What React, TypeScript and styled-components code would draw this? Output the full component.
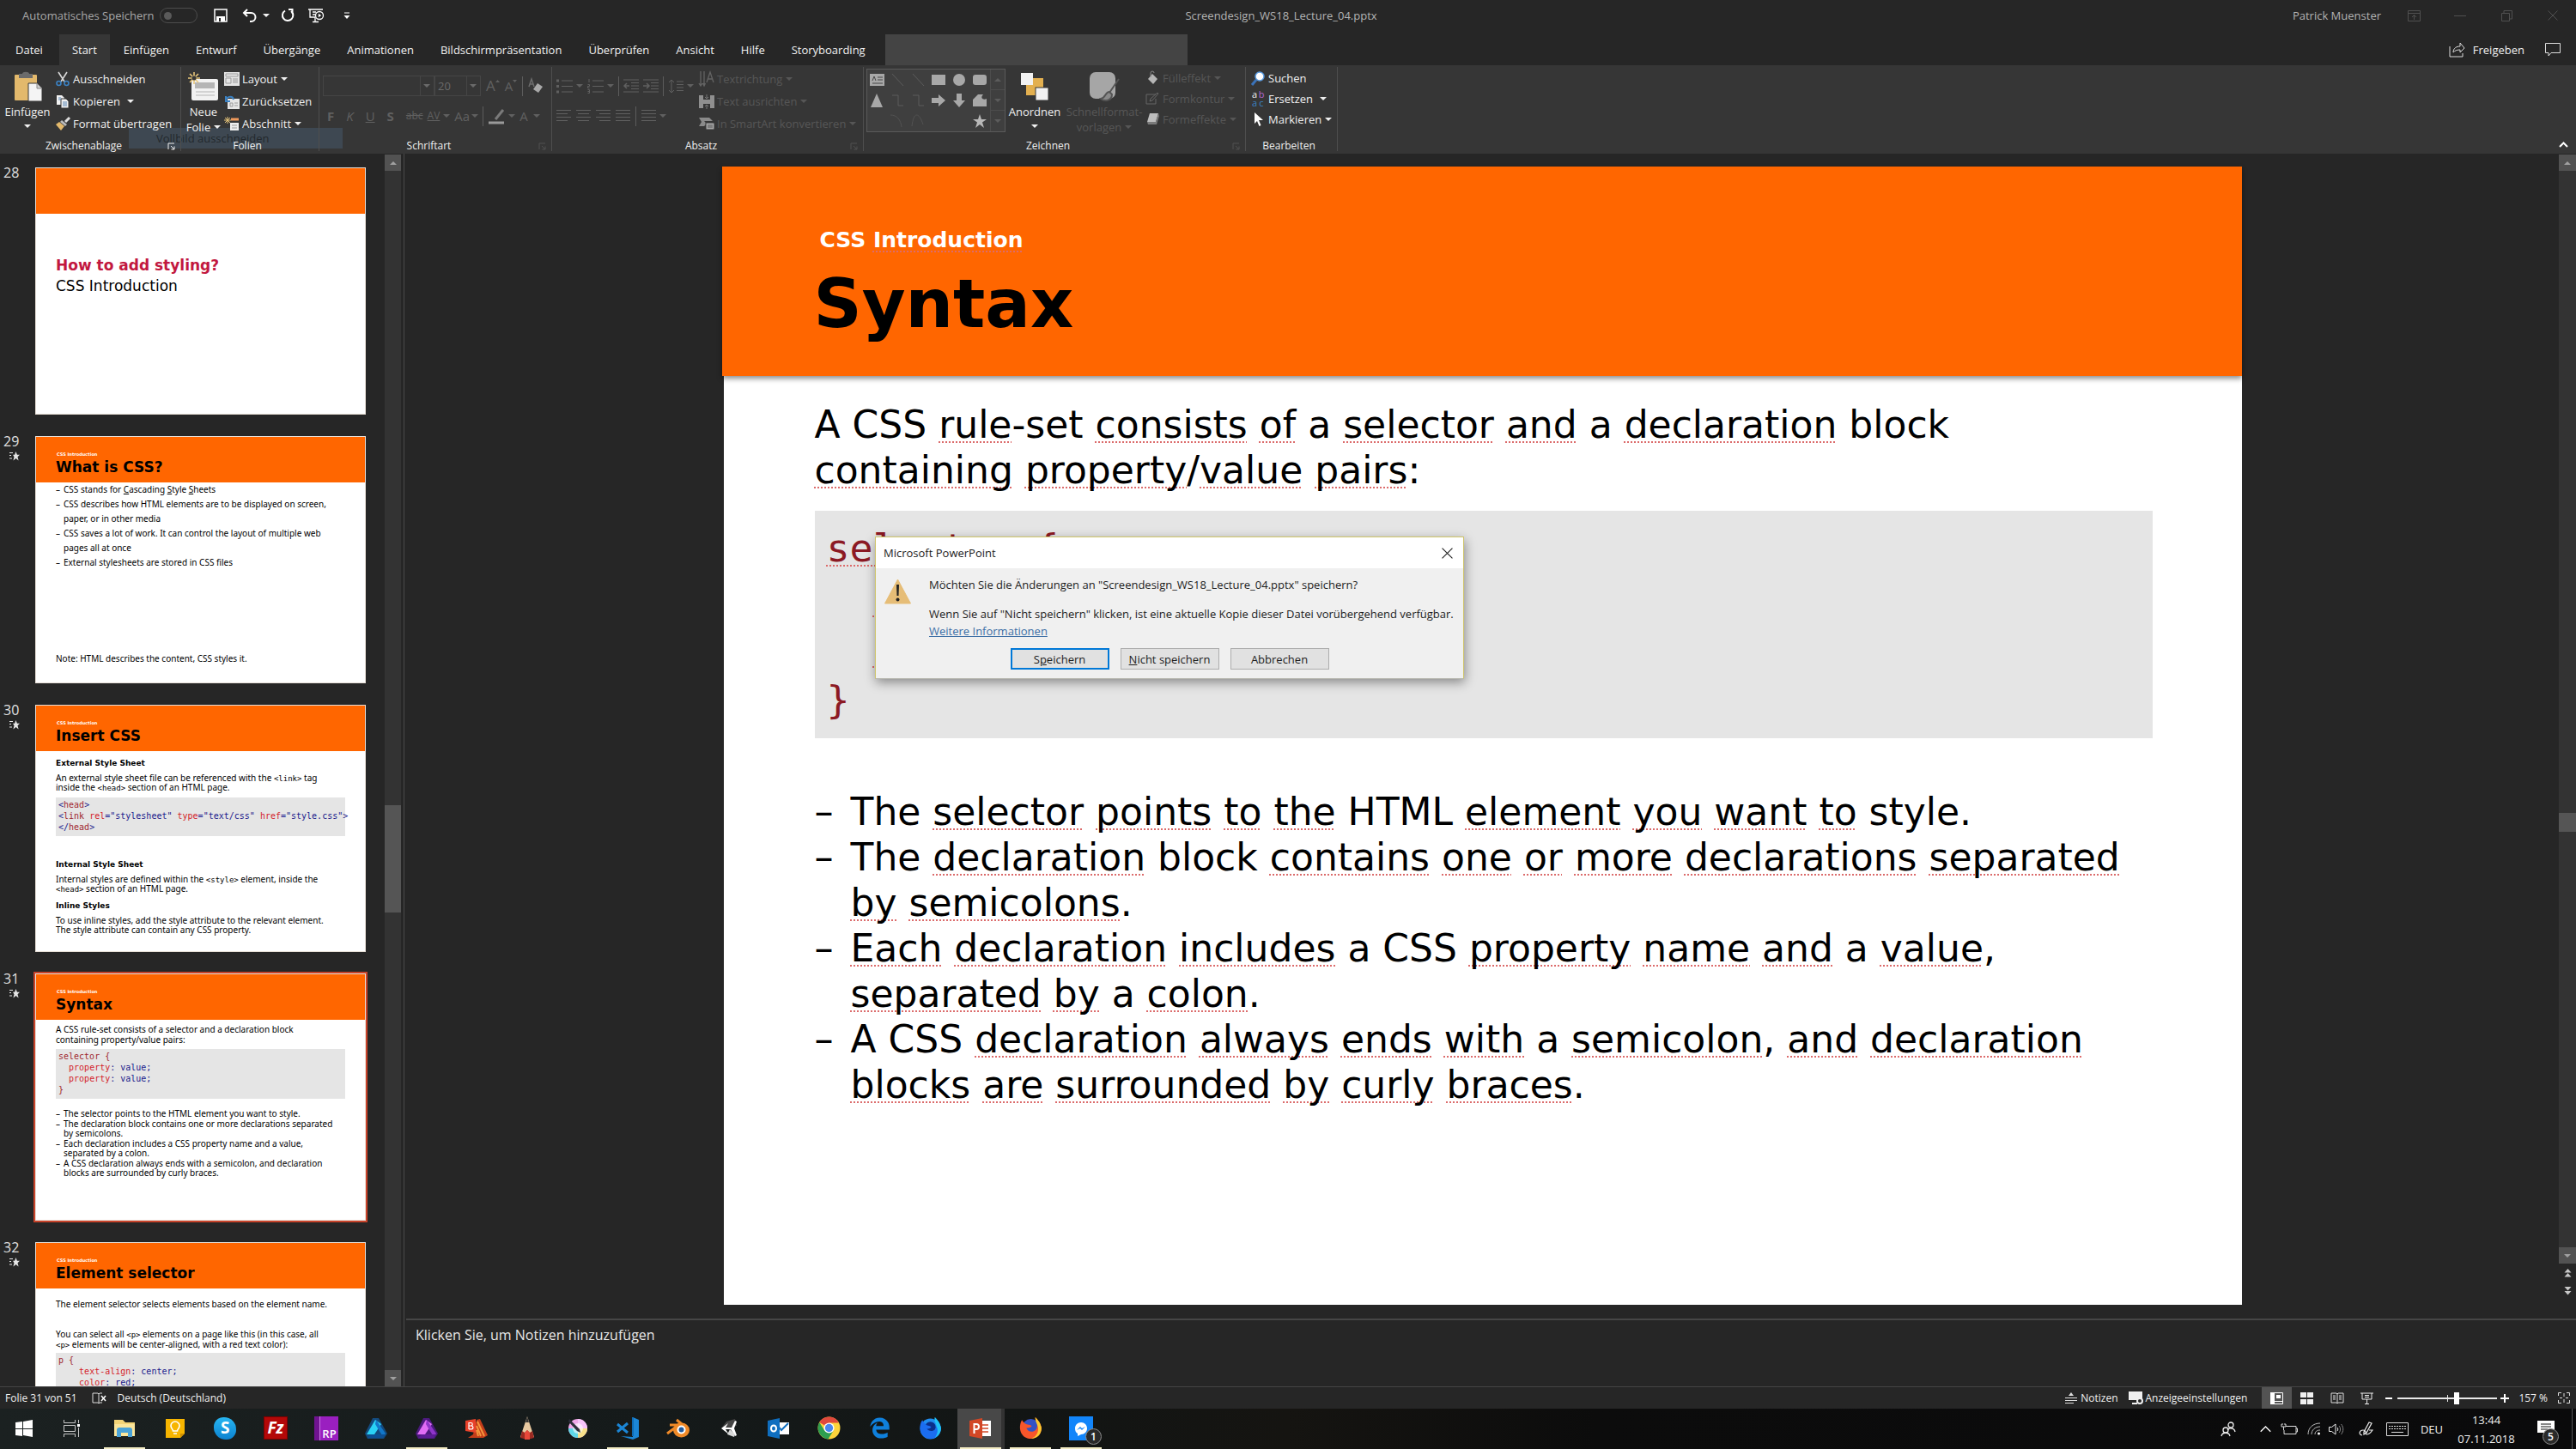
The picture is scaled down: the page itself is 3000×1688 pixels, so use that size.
import React from "react";
import styled, { createGlobalStyle, css } from "styled-components";
import { FaEdgeLegacy } from "react-icons/fa";

const ui = `"Open Sans", "Noto Sans", sans-serif`;
const slideFont = `"DejaVu Sans", sans-serif`;
const mono = `"DejaVu Sans Mono", monospace`;

const Global = createGlobalStyle`
  * { box-sizing: border-box; }
  html, body { margin: 0; height: 100%; }
  body { background: #262626; color: #f0f0f0; font: 13px/18px ${ui}; overflow: hidden; }
  button, input { font: inherit; color: inherit; margin: 0; padding: 0; border: 0; background: none; }
  svg { display: block; flex: none; overflow: visible; }
  h2, h3, p, ul, ol, pre { margin: 0; padding: 0; font-weight: normal; }
  ul, ol { list-style: none; }
`;

/* ---------- shared ---------- */

type IconProps = { w: number; h: number; vb?: string; children: React.ReactNode };
const Icon = ({ w, h, vb, children }: IconProps) => (
  <svg width={w} height={h} viewBox={vb ?? `0 0 ${w} ${h}`} fill="none" aria-hidden="true">
    {children}
  </svg>
);

const Row = styled.div<{ $gap?: number }>`
  display: flex;
  align-items: center;
  gap: ${(p) => p.$gap ?? 0}px;
`;

const Caret = styled.span<{ $space?: number }>`
  flex: none;
  width: 0;
  height: 0;
  margin-left: ${(p) => p.$space ?? 4}px;
  border: 4px solid transparent;
  border-top-color: currentColor;
  border-bottom: 0;
`;

const App = styled.div`
  display: flex;
  flex-direction: column;
  height: 100vh;
  position: relative;
`;

/* ---------- title bar ---------- */

const TitleBar = styled.header`
  display: grid;
  grid-template-columns: 1fr auto 1fr;
  align-items: center;
  height: 40px;
  padding-bottom: 4px;
  color: #b4b4b4;
`;

const QuickAccess = styled.div`
  display: flex;
  align-items: center;
  padding-left: 26px;
  color: #f4f4f4;
`;

const AutoSave = styled.label`
  display: flex;
  align-items: center;
  gap: 6px;
  color: #a8a8a8;
  margin-right: 19px;
`;

const Toggle = styled.input`
  appearance: none;
  width: 44px;
  height: 18px;
  border: 1px solid #4c4c4c;
  border-radius: 9px;
  display: flex;
  align-items: center;
  padding-left: 4px;
  &::before {
    content: "";
    width: 9px;
    height: 9px;
    border-radius: 50%;
    background: #5a5a5a;
  }
`;

const ToolButton = styled.button<{ $space?: number }>`
  display: flex;
  align-items: center;
  margin-right: ${(p) => p.$space ?? 0}px;
`;

const DocTitle = styled.div`
  margin-right: 16px;
`;

const WindowTools = styled.div`
  display: flex;
  justify-content: flex-end;
  align-items: center;
`;

const UserName = styled.span`
  margin-right: 11px;
`;

const WindowButton = styled.button`
  width: 54px;
  display: flex;
  justify-content: center;
  color: #505050;
`;

/* ---------- tabs ---------- */

const TabRow = styled.nav`
  display: flex;
  align-items: stretch;
  gap: 1px;
  height: 36px;
`;

const Tab = styled.button<{ $active?: boolean; $wide?: boolean }>`
  padding: 0 ${(p) => (p.$wide ? 18 : 15)}px;
  ${(p) => p.$active && css`background: #363636;`}
`;

const TellMe = styled.input`
  width: 352px;
  margin-left: 7px;
  background: #444;
`;

const TabTools = styled.div`
  display: flex;
  align-items: center;
  gap: 24px;
  margin-left: auto;
  padding-right: 18px;
`;

const ShareButton = styled.button`
  display: flex;
  align-items: center;
  gap: 9px;
`;

/* ---------- ribbon ---------- */

const Ribbon = styled.section`
  display: grid;
  grid-template-columns: 211px 161px 271px 363px 445px 107px 1fr;
  height: 103px;
  padding: 2px 0 3px;
  background: #363636;
  position: relative;
  isolation: isolate;
`;

const GhostTip = styled.div`
  position: absolute;
  z-index: -1;
  left: 150px;
  top: 73px;
  width: 249px;
  height: 24px;
  padding: 0 32px;
  line-height: 24px;
  background: #3e4852;
  color: #23282d;
`;

const Group = styled.section`
  display: flex;
  flex-direction: column;
  border-right: 1px solid #4e4e4e;
`;

const GroupBody = styled.div<{ $left?: number; $gap?: number }>`
  display: flex;
  flex: 1;
  align-items: flex-start;
  gap: ${(p) => p.$gap ?? 0}px;
  padding: 1px 0 0 ${(p) => p.$left ?? 0}px;
`;

const GroupFooter = styled.footer`
  display: flex;
  align-items: center;
  height: 18px;
  margin-bottom: -3px;
  padding-right: 6px;
  font-size: 12px;
  line-height: 16px;
`;

const GroupLabel = styled.span`
  flex: 1;
  text-align: center;
`;

const Dim = styled.span`
  display: flex;
  color: #505050;
`;

const BigButton = styled.button<{ $w: number; $dim?: boolean }>`
  display: flex;
  flex-direction: column;
  align-items: center;
  width: ${(p) => p.$w}px;
  padding-top: 2px;
  ${(p) => p.$dim && css`color: #565656;`}
`;

const BigIcon = styled.span`
  display: flex;
  align-items: center;
  height: 40px;
`;

const BigCaret = styled(Caret)`
  margin: 6px 0 0;
`;

const SmallColumn = styled.div`
  display: flex;
  flex-direction: column;
`;

const SmallButton = styled.button<{ $h?: number; $dim?: boolean }>`
  display: flex;
  align-items: center;
  height: ${(p) => p.$h ?? 26}px;
  white-space: nowrap;
  ${(p) => p.$dim && css`color: #565656;`}
`;

const SmallIcon = styled.span`
  display: flex;
  justify-content: center;
  width: 18px;
  margin-right: 3px;
`;

const ToolLines = styled.div<{ $end?: number }>`
  display: flex;
  flex-direction: column;
  gap: 11px;
  padding: 9px ${(p) => p.$end ?? 0}px 0 0;
  color: #606060;
`;

const ToolLine = styled.div<{ $gap?: number; $left?: number }>`
  display: flex;
  align-items: center;
  height: 24px;
  gap: ${(p) => p.$gap ?? 8}px;
  padding-left: ${(p) => p.$left ?? 0}px;
`;

const Combo = styled.div<{ $w: number }>`
  display: flex;
  align-items: center;
  width: ${(p) => p.$w}px;
  height: 24px;
  border: 1px solid #454545;
  padding-right: 4px;
  color: #6a6a6a;
`;

const ComboInput = styled.input`
  flex: 1;
  min-width: 0;
  height: 22px;
  padding-left: 3px;
  border-right: 1px solid #454545;
`;

const Divider = styled.span`
  width: 1px;
  height: 23px;
  background: #5c5c5c;
`;

const Letter = styled.button<{ $size?: number; $weight?: number; $deco?: string; $italic?: boolean }>`
  font-size: ${(p) => p.$size ?? 15}px;
  line-height: 20px;
  font-weight: ${(p) => p.$weight ?? 400};
  font-style: ${(p) => (p.$italic ? "italic" : "normal")};
  text-decoration: ${(p) => p.$deco ?? "none"};
`;

const PlainButton = styled.button`
  display: flex;
  align-items: center;
`;

const Gallery = styled.div`
  display: grid;
  grid-template-columns: 143px 17px;
  width: 162px;
  height: 74px;
  margin-top: 1px;
  border: 1px solid #5a5a5a;
  background: #3f3f3f;
`;

const Shapes = styled.div`
  display: grid;
  grid-template-columns: repeat(6, 1fr);
  grid-template-rows: repeat(3, 24px);
`;

const ShapeButton = styled.button`
  display: flex;
  align-items: center;
  justify-content: center;
`;

const GalleryScroll = styled.div`
  display: grid;
  grid-template-rows: repeat(3, 1fr);
  border-left: 1px solid #4c4c4c;
  color: #5c5c5c;
`;

const ScrollStep = styled.button<{ $up?: boolean }>`
  display: flex;
  align-items: center;
  justify-content: center;
  border-bottom: 1px solid #4c4c4c;
  &:last-child { border-bottom: 0; }
  & > span { margin: 0; transform: ${(p) => (p.$up ? "rotate(180deg)" : "none")}; }
`;

const RibbonEnd = styled.div`
  display: flex;
  justify-content: flex-end;
  align-items: flex-end;
  padding: 0 9px 4px;
`;

/* ---------- workspace ---------- */

const Workspace = styled.main`
  display: flex;
  flex: 1;
  min-height: 0;
`;

const Sidebar = styled.aside`
  display: flex;
  width: 471px;
  padding-right: 3px;
  border-right: 1px solid #4a4a4a;
  overflow: hidden;
`;

const ThumbList = styled.ol`
  display: flex;
  flex-direction: column;
  gap: 25px;
  flex: 1;
  padding-top: 16px;
  overflow: hidden;
`;

const ThumbItem = styled.li`
  display: grid;
  grid-template-columns: 41px 385px;
  flex: none;
`;

const ThumbIndex = styled.div`
  padding-left: 4px;
  color: #e0e0e0;
  font-size: 16px;
  line-height: 20px;
  & > span { display: block; height: 16px; line-height: 12px; }
  & > svg { margin: 2px 0 0 7px; }
`;

const Thumb = styled.div<{ $selected?: boolean }>`
  height: 288px;
  background: #fff;
  color: #000;
  border: 1px solid #e8e0d8;
  font-family: ${slideFont};
  overflow: hidden;
  ${(p) => p.$selected && css`outline: 2px solid #c8432a;`}
`;

const ThumbHead = styled.div`
  height: 53px;
  padding: 16px 23px 0;
  background: #ff6600;
`;

const ThumbEyebrow = styled.p`
  color: #fff;
  font-size: 5px;
  line-height: 8px;
  font-weight: 700;
  padding-left: 1px;
`;

const ThumbTitle = styled.h3`
  color: #000;
  font-size: 17px;
  line-height: 22px;
  font-weight: 700;
`;

const ThumbBody = styled.div<{ $top?: number }>`
  padding: ${(p) => p.$top ?? 0}px 23px 0;
  font: 10px/11px "Noto Sans", sans-serif;
  white-space: nowrap;
`;

const ThumbLead = styled.p<{ $accent?: boolean }>`
  font: 17px/24px ${slideFont};
  color: #000;
  ${(p) => p.$accent && css`color: #c2183f; font-weight: 700;`}
`;

const ThumbHeading = styled.p<{ $top?: number }>`
  margin-top: ${(p) => p.$top ?? 0}px;
  font: 700 9px/12px ${slideFont};
  color: #000;
`;

const ThumbText = styled.p<{ $top?: number; $line?: number }>`
  margin-top: ${(p) => p.$top ?? 0}px;
  line-height: ${(p) => p.$line ?? 11}px;
`;

const ThumbBullets = styled.ul<{ $top?: number; $line?: number; $gap?: number }>`
  display: flex;
  flex-direction: column;
  gap: ${(p) => p.$gap ?? 0}px;
  margin-top: ${(p) => p.$top ?? 0}px;
  line-height: ${(p) => p.$line ?? 11}px;
  & > li { display: grid; grid-template-columns: 9px 1fr; }
  & > li::before { content: "–"; }
`;

const ThumbCode = styled.pre<{ $top?: number }>`
  margin: ${(p) => p.$top ?? 0}px 0 0;
  padding: 2px 0 4px 3px;
  background: #e5e5e5;
  font: 10px/13px ${mono};
  color: #a0282f;
`;

const InlineCode = styled.code`
  font: 9px/1px ${mono};
`;

const Prop = styled.span`color: #d41f2c;`;
const Val = styled.span`color: #1a1a8c;`;

const ScrollBar = styled.div<{ $w: number }>`
  display: flex;
  flex-direction: column;
  flex: none;
  width: ${(p) => p.$w}px;
  padding-top: 1px;
`;

const ScrollButton = styled.button<{ $h?: number; $up?: boolean; $plain?: boolean }>`
  display: flex;
  align-items: center;
  justify-content: center;
  height: ${(p) => p.$h ?? 19}px;
  background: ${(p) => (p.$plain ? "none" : "#525252")};
  color: #a0a0a0;
  & > span { margin: 0; transform: ${(p) => (p.$up ? "rotate(180deg)" : "none")}; }
`;

const Track = styled.div<{ $before: number; $after: number }>`
  display: flex;
  flex-direction: column;
  flex: 1;
  background: #333;
  &::before { content: ""; flex: ${(p) => p.$before}; }
  &::after { content: ""; flex: ${(p) => p.$after}; }
`;

const Handle = styled.div<{ $h: number }>`
  height: ${(p) => p.$h}px;
  background: #555;
`;

const Center = styled.section`
  display: flex;
  flex-direction: column;
  flex: 1;
  min-width: 0;
  padding-left: 2px;
`;

const Stage = styled.div`
  display: flex;
  flex: 1;
  min-height: 0;
`;

const Canvas = styled.div`
  display: flex;
  justify-content: center;
  flex: 1;
  padding: 15px 0 16px;
`;

const Slide = styled.article`
  height: 100%;
  aspect-ratio: 4 / 3;
  background: #fff;
  color: #000;
  font: 44px/53px ${slideFont};
`;

const SlideHead = styled.header`
  height: 244px;
  margin-left: -2px;
  padding: 71px 0 0 107px;
  background: #ff6600;
  box-shadow: 0 3px 6px rgba(0, 0, 0, 0.45);
`;

const Eyebrow = styled.p`
  padding-left: 7px;
  color: #fff;
  font-size: 25px;
  line-height: 30px;
  font-weight: 700;
`;

const SlideTitle = styled.h2`
  margin-top: 14px;
  font-size: 78px;
  line-height: 90px;
  font-weight: 700;
`;

const SlideBody = styled.div`
  padding: 30px 104px 0 106px;
  white-space: nowrap;
`;

const Typo = styled.span`
  text-decoration: underline dotted #dc6c6c 2px;
  text-underline-offset: 4px;
  text-decoration-skip-ink: none;
`;

const CodeBlock = styled.pre`
  margin: 21px 0 59px;
  padding: 14px 14px 15px;
  background: #e5e5e5;
  font: 45px/59px ${mono};
  color: #8c1a24;
`;

const Bullets = styled.ul`
  & > li { display: grid; grid-template-columns: 42px 1fr; }
  & > li::before { content: "–"; }
`;

const NotesPane = styled.section`
  height: 79px;
  border-top: 2px solid #464646;
  padding: 6px 11px;
  font-size: 16px;
  line-height: 22px;
  color: #e6e6e6;
`;

/* ---------- dialog ---------- */

const Dialog = styled.section`
  position: absolute;
  left: 1019px;
  top: 625px;
  width: 686px;
  background: #f0f0f0;
  border: 1px solid #cfc46a;
  border-bottom-color: #b8b8b0;
  box-shadow: 1px 4px 12px rgba(0, 0, 0, 0.4);
  color: #1c1c1c;
`;

const DialogHead = styled.header`
  display: flex;
  align-items: center;
  justify-content: space-between;
  height: 36px;
  padding: 0 12px 0 9px;
  background: #fff;
`;

const DialogMain = styled.div`
  display: grid;
  grid-template-columns: 53px 1fr;
  padding: 10px 0 0 9px;
`;

const DialogText = styled.div`
  display: flex;
  flex-direction: column;
  white-space: nowrap;
  & > p + p { margin-top: 16px; }
  & > a { color: #3c6ea5; margin-top: 2px; width: max-content; }
`;

const WarnIcon = styled.div`
  padding-top: 2px;
`;

const DialogActions = styled.footer`
  display: flex;
  justify-content: center;
  gap: 13px;
  padding: 11px 0 10px;
`;

const DialogButton = styled.button<{ $primary?: boolean }>`
  width: 115px;
  height: 25px;
  background: #e1e1e1;
  border: ${(p) => (p.$primary ? "2px solid #0078d7" : "1px solid #adadad")};
`;

/* ---------- status bar ---------- */

const StatusBar = styled.footer`
  display: flex;
  align-items: center;
  height: 26px;
  padding: 0 7px 0 6px;
  border-top: 1px solid #444;
  font-size: 12px;
  line-height: 16px;
`;

const StatusSpacer = styled.div`flex: 1;`;

const StatusButton = styled.button<{ $space?: number; $gap?: number }>`
  display: flex;
  align-items: center;
  gap: ${(p) => p.$gap ?? 4}px;
  margin-right: ${(p) => p.$space ?? 0}px;
`;

const ViewButton = styled.button<{ $active?: boolean }>`
  display: flex;
  align-items: center;
  justify-content: center;
  width: 35px;
  height: 25px;
  ${(p) => p.$active && css`background: #535353;`}
`;

const Zoom = styled.input`
  appearance: none;
  width: 116px;
  height: 14px;
  margin: 0 4px;
  background:
    linear-gradient(#e8e8e8, #e8e8e8) 50% 50% / 1px 8px no-repeat,
    linear-gradient(#e8e8e8, #e8e8e8) 50% 50% / 100% 2px no-repeat;
  &::-webkit-slider-thumb {
    appearance: none;
    width: 6px;
    height: 14px;
    background: #fff;
  }
`;

/* ---------- taskbar ---------- */

const Taskbar = styled.footer`
  display: flex;
  height: 47px;
  background: linear-gradient(90deg, #1b2121 0, #151a1a 25%, #121514 40%, #151411 50%, #0c0c0c 62%, #0a0a0b 100%);
`;

const SystemApps = styled.div`
  display: flex;
  justify-content: space-between;
  width: 112px;
  padding: 0 4px;
`;

const Apps = styled.div`
  display: flex;
  justify-content: space-between;
  width: 1162px;
  margin-left: 9px;
`;

const TaskButton = styled.button<{ $open?: boolean; $active?: boolean }>`
  display: flex;
  align-items: center;
  justify-content: center;
  position: relative;
  width: 48px;
  border-bottom: 2px solid ${(p) => (p.$open ? "#f3ecc4" : "transparent")};
  ${(p) => p.$active && css`background: #484848; box-shadow: 4px 0 0 #333, -3px 0 0 #484848;`}
`;

const Badge = styled.span`
  position: absolute;
  right: 0;
  bottom: 3px;
  width: 19px;
  height: 19px;
  border: 1px solid #8a8a8a;
  border-radius: 50%;
  background: #2a2a2a;
  color: #fff;
  font-size: 12px;
  line-height: 17px;
  font-weight: 600;
  text-align: center;
`;

const Tray = styled.div`
  display: flex;
  margin-left: auto;
  border-right: 1px solid #555;
  margin-right: 4px;
`;

const TrayButton = styled.button<{ $w: number }>`
  display: flex;
  align-items: center;
  justify-content: center;
  position: relative;
  width: ${(p) => p.$w}px;
`;

const Clock = styled.time`
  display: flex;
  flex-direction: column;
  justify-content: center;
  width: 79px;
  text-align: center;
  line-height: 22px;
`;

const TrayBadge = styled(Badge)`
  right: 15px;
  bottom: 5px;
`;

/* ---------- icons ---------- */

const Launcher = () => (
  <Icon w={9} h={9}>
    <path d="M1 8V1h7M4 4l4 4M8 4.500V8H4.500" stroke="currentColor" />
  </Icon>
);

const SaveIcon = () => (
  <Icon w={16} h={16}>
    <path d="M1 1h14v14H1z" stroke="#fff" strokeWidth="1.500" />
    <path d="M3 9h10v6H3z" fill="#fff" />
    <path d="M6 11h2v4H6z" fill="#262626" />
  </Icon>
);
const UndoIcon = () => (
  <Icon w={18} h={16}>
    <path d="M2 5h8.500a5 5 0 0 1 0 10H9M6 1L2 5l4 4" stroke="#fff" strokeWidth="2" />
  </Icon>
);
const RedoIcon = () => (
  <Icon w={16} h={16}>
    <path d="M5 2.500A6.200 6.200 0 1 0 12 3M9 1h4.500v5" stroke="#fff" strokeWidth="2" />
  </Icon>
);
const PresentIcon = () => (
  <Icon w={20} h={18}>
    <path d="M1 2h17M3 2v9h6M6 5h4M6 8h3M9 11v5M6 16.500h7" stroke="#fff" strokeWidth="1.300" />
    <circle cx="14" cy="9" r="4.500" stroke="#fff" strokeWidth="1.300" />
    <path d="M12.800 6.800l3.400 2.200-3.400 2.200z" fill="#fff" />
  </Icon>
);
const CustomIcon = () => (
  <Icon w={8} h={10}>
    <path d="M1 2h6" stroke="#fff" />
    <path d="M0.500 5h7L4 9z" fill="#fff" />
  </Icon>
);

const PasteIcon = () => (
  <Icon w={34} h={36}>
    <rect x="2" y="4" width="26" height="30" rx="1" fill="#e3b96c" />
    <path d="M7 8V3h4c0-3 8-3 8 0h4v5z" fill="#6b6b6b" />
    <path d="M18 14h10l6 6v15H18z" fill="#f4f4f4" stroke="#363636" />
    <path d="M28 14v6h6" fill="#d0d0d0" stroke="#888" />
  </Icon>
);
const CutIcon = () => (
  <Icon w={16} h={18}>
    <path d="M3 1l7 11M13 1L6 12" stroke="#d8d8d8" strokeWidth="1.600" />
    <circle cx="3.500" cy="14" r="2.500" stroke="#3b82c4" strokeWidth="1.600" />
    <circle cx="12.500" cy="14" r="2.500" stroke="#3b82c4" strokeWidth="1.600" />
  </Icon>
);
const CopyIcon = () => (
  <Icon w={16} h={17}>
    <path d="M1 1h6l3 3v8H1z" fill="#f2f2f2" />
    <path d="M6 5h6l3 3v8H6z" fill="#f2f2f2" stroke="#363636" />
    <path d="M3 4h3M3 6h3M8 9h5M8 11h5M8 13h5" stroke="#5b87b5" />
  </Icon>
);
const BrushIcon = () => (
  <Icon w={18} h={16}>
    <path d="M17 1l-5 5" stroke="#ddd" strokeWidth="3" />
    <path d="M8 4l6 5-2 2-6-5z" fill="#bbb" />
    <path d="M5 6l6 5-4 5L1 9z" fill="#e3b96c" />
  </Icon>
);
const NewSlideIcon = () => (
  <Icon w={36} h={34}>
    <rect x="4" y="8" width="31" height="25" rx="2" fill="#f2f2f2" />
    <rect x="8" y="12" width="23" height="7" fill="#b5b5b5" />
    <path d="M9 23h22M9 27h22" stroke="#b5b5b5" />
    <path d="M7 0v14M0 7h14M2 2l10 10M12 2L2 12" stroke="#e8c67a" strokeWidth="1.600" />
    <circle cx="7" cy="7" r="2.500" fill="#363636" />
  </Icon>
);
const LayoutIcon = () => (
  <Icon w={18} h={16}>
    <rect width="18" height="16" fill="#e6e6e6" />
    <path d="M2 2h14v3H2zM2 7h6v6H2zM10 8h6M10 10h6M10 12h6" stroke="#9a9a9a" />
  </Icon>
);
const ResetIcon = () => (
  <Icon w={18} h={17}>
    <rect x="4" y="5" width="14" height="12" fill="#e6e6e6" />
    <path d="M7 10h3v4H7zM12 10h4M12 13h4" stroke="#9a9a9a" />
    <path d="M2 8c0-6 8-7 9-2M2 2v6h5" stroke="#3b82c4" strokeWidth="2" />
  </Icon>
);
const SectionIcon = () => (
  <Icon w={18} h={17}>
    <path d="M4 0v8M0 4h8M1 1l6 6M7 1L1 7" stroke="#e8c67a" />
    <path d="M8 3h9" stroke="#f09a5c" strokeWidth="3" />
    <rect x="7" y="7" width="10" height="9" fill="#eee" />
    <path d="M9 10h6M9 13h6" stroke="#999" />
  </Icon>
);
const EraserIcon = () => (
  <Icon w={18} h={18}>
    <path d="M1 10L4 1l3 9M2 7h4" stroke="#6c6c6c" strokeWidth="1.500" />
    <path d="M11 6l6 4-5 7-6-4z" fill="#a8a8a8" />
  </Icon>
);
const SizeMark = ({ down }: { down?: boolean }) => (
  <Icon w={5} h={16}>
    <path d={down ? "M0 1h5L2.500 4z" : "M0 4h5L2.500 1z"} fill="currentColor" />
  </Icon>
);
const LinesIcon = ({ w = 17, cut = 0, shift = 0 }: { w?: number; cut?: number; shift?: number }) => (
  <Icon w={w} h={17}>
    <path
      d={`M0 1.500h${w}M${shift} 5.500h${w - cut}M0 9.500h${w}M${shift} 13.500h${w - cut}`}
      stroke="currentColor"
    />
  </Icon>
);
const ListIcon = () => (
  <Icon w={19} h={17}>
    <path d="M0 2h3M0 8.500h3M0 15h3" stroke="currentColor" strokeWidth="3" />
    <path d="M6 2h13M6 8.500h13M6 15h13" stroke="currentColor" />
  </Icon>
);
const NumberIcon = () => (
  <Icon w={19} h={17}>
    <path d="M2 0v4M0.500 6.500h2v2h-2v2h2M0.500 12.500h2v4h-2M0.500 14.500h2" stroke="currentColor" />
    <path d="M6 2h13M6 8.500h13M6 15h13" stroke="currentColor" />
  </Icon>
);
const IndentIcon = ({ flip }: { flip?: boolean }) => (
  <Icon w={18} h={17}>
    <path d="M0 1h18M9 4.500h9M9 8h9M9 11.500h9M0 15h18" stroke="currentColor" />
    <path d={flip ? "M0 8h7M4 5l3 3-3 3" : "M7 8H1M4 5L1 8l3 3"} stroke="currentColor" strokeWidth="1.500" />
  </Icon>
);
const SpacingIcon = () => (
  <Icon w={18} h={17}>
    <path d="M4 1v15M1 4l3-3 3 3M1 13l3 3 3-3M10 3h8M10 6.500h8M10 10h8M10 13.500h8" stroke="currentColor" />
  </Icon>
);
const TextDirIcon = () => (
  <Icon w={18} h={18}>
    <path d="M2 0v16M6 0v16M0 14l2 3 2-3M4.500 14L6 17l1.500-3M9 13l4-12 4 12M10.500 9h5" stroke="#646464" strokeWidth="1.300" />
  </Icon>
);
const AlignTextIcon = () => (
  <Icon w={18} h={17}>
    <path d="M0 1h5v15H0zM13 1h5v15h-5zM5 6h8v5H5z" fill="#8f8f8f" />
    <path d="M9 0v5M7 3l2 2 2-2M9 17v-5M7 14l2-2 2 2" stroke="#777" />
  </Icon>
);
const SmartArtIcon = () => (
  <Icon w={18} h={16}>
    <path d="M0 1h12l4 4H6l3 3-3 3H0l3-5z" fill="#8a8a8a" />
    <rect x="8" y="7" width="10" height="8" fill="#a8a8a8" stroke="#363636" />
    <path d="M10 10h6M10 12h6" stroke="#555" />
  </Icon>
);
const ArrangeIcon = () => (
  <Icon w={34} h={34}>
    <rect x="15" y="7" width="12" height="12" fill="#e3b050" />
    <rect x="7" y="15" width="12" height="12" fill="#e3b050" />
    <rect x="1" y="1" width="14" height="14" fill="#f2f2f2" />
    <rect x="18" y="18" width="15" height="15" fill="#f2f2f2" stroke="#363636" />
  </Icon>
);
const QuickStyleIcon = () => (
  <Icon w={36} h={36}>
    <rect x="1" y="1" width="30" height="31" rx="7" fill="#a6a6a6" />
    <path d="M35 9L24 25M24 24c-5 0-4 7-10 8 5 4 13 2 13-5z" stroke="#555" strokeWidth="2" fill="#8a8a8a" />
  </Icon>
);
const FillIcon = () => (
  <Icon w={16} h={16}>
    <path d="M8 3l6 6-5 6-6-6z" fill="#b5b5b5" />
    <path d="M6 7V2a2 2 0 0 1 4 0" stroke="#8a8a8a" />
  </Icon>
);
const OutlineIcon = () => (
  <Icon w={18} h={16}>
    <path d="M13 3H2v11h11V8M6 11l1-3 8-7 1 1-7 8z" stroke="#666" />
  </Icon>
);
const EffectIcon = () => (
  <Icon w={18} h={16}>
    <path d="M6 1h10l-3 10H3z" fill="#bdbdbd" />
    <path d="M3 11h10l3-10 1 3-3 10H4z" fill="#7a7a7a" />
  </Icon>
);
const SearchIcon = () => (
  <Icon w={16} h={17}>
    <path d="M6 10l-5 6" stroke="#3b73b9" strokeWidth="3" />
    <circle cx="10" cy="6" r="5" fill="#fff" stroke="#5a9be0" strokeWidth="1.500" />
  </Icon>
);

const ReplaceGrid = styled.span`
  display: grid;
  grid-template-columns: 8px 8px;
  font-size: 11px;
  line-height: 10px;
`;
const Glyph = styled.span<{ $color: string }>`
  color: ${(p) => p.$color};
`;
const ReplaceIcon = () => (
  <ReplaceGrid aria-hidden="true">
    <Glyph $color="#f0f0f0">a</Glyph>
    <Glyph $color="#b066d0">b</Glyph>
    <Glyph $color="#3b82c4">a</Glyph>
    <Glyph $color="#3b82c4">c</Glyph>
  </ReplaceGrid>
);
const CursorIcon = () => (
  <Icon w={14} h={17}>
    <path d="M3 0v13l3-3 2.500 6 2-1L8 9h5z" fill="#fff" />
  </Icon>
);
const StarIcon = () => (
  <Icon w={12} h={11}>
    <path d="M7.500 0l1.400 3.800H12L9.500 6.300l1.100 4.200-3.100-2.400-3.100 2.400 1.100-4.200L4 3.800h2.100z" fill="#e6e6e6" />
    <path d="M0 1.500h4M0 4.500h2M0 8h3" stroke="#e6e6e6" />
  </Icon>
);
const CloseIcon = ({ size = 12 }: { size?: number }) => (
  <Icon w={size} h={size} vb="0 0 12 12">
    <path d="M0.500 0.500l11 11M11.500 0.500l-11 11" stroke="currentColor" />
  </Icon>
);
const ChevronUp = ({ w = 11, stroke = 2 }: { w?: number; stroke?: number }) => (
  <Icon w={w} h={w === 11 ? 7 : 9} vb="0 0 11 7">
    <path d="M1 6l4.500-4.500L10 6" stroke="#fff" strokeWidth={stroke} />
  </Icon>
);

const shapes: React.ReactNode[] = [
  <React.Fragment key="text">
    <rect x="0" y="1" width="17" height="14" fill="#a8a8a8" />
    <path d="M3 9l2-5 2 5M9 5h6M9 8h6M3 12h12" stroke="#444" />
  </React.Fragment>,
  <path key="l1" d="M2 1l13 14" stroke="#5c5c5c" />,
  <path key="l2" d="M2 1l13 14" stroke="#5c5c5c" />,
  <rect key="r" y="2" width="16" height="12" fill="#a8a8a8" />,
  <circle key="c" cx="8" cy="8" r="7" fill="#a8a8a8" />,
  <rect key="rr" y="2" width="16" height="12" rx="3" fill="#a8a8a8" />,
  <path key="t" d="M8 0l7 16H1z" fill="#a8a8a8" />,
  <path key="e1" d="M2 2h7v12h6" stroke="#5c5c5c" />,
  <path key="e2" d="M2 2h7v12h6" stroke="#5c5c5c" />,
  <path key="ar" d="M0 5h8V1l8 7-8 7v-4H0z" fill="#a8a8a8" />,
  <path key="ad" d="M5 0h6v8h4l-7 8-7-8h4z" fill="#a8a8a8" />,
  <path key="f" d="M0 15V7l6-6h6c-4 4 0 7 4 5v9z" fill="#a8a8a8" />,
  null,
  <path key="a1" d="M0 1c8 0 12 6 13 14" stroke="#525252" />,
  <path key="a2" d="M1 14C3-3 9-3 14 12" stroke="#525252" />,
  null,
  null,
  <path key="s" d="M8 0l2 6h6l-5 3.500L13 16l-5-4-5 4 2-6.500L0 6h6z" fill="#b8b8b8" />,
];

/* ---------- data ---------- */

const tabs = [
  "Datei", "Start", "Einfügen", "Entwurf", "Übergänge", "Animationen",
  "Bildschirmpräsentation", "Überprüfen", "Ansicht", "Hilfe", "Storyboarding",
];

// Words in square brackets carry the spell-checker's underline.
const spell = (text: string) =>
  text.split(/(\[[^\]]+\])/).map((part, i) =>
    part.startsWith("[") ? <Typo key={i}>{part.slice(1, -1)}</Typo> : part,
  );

const bullets: string[][] = [
  ["The [selector] [points] [to] [the] HTML [element] [you] [want] [to] style."],
  ["The [declaration] block [contains] [one] [or] [more] [declarations] [separated]", "[by] [semicolons]."],
  ["[Each] [declaration] [includes] a CSS [property] [name] [and] a [value],", "[separated] [by] a [colon]."],
  ["A CSS [declaration] [always] [ends] [with] a [semicolon], [and] [declaration]", "[blocks] [are] [surrounded] [by] [curly] [braces]."],
];

const plain = (text: string) => text.replace(/[[\]]/g, "");

const Lines = ({ rows, marked }: { rows: string[]; marked?: boolean }) => (
  <span>
    {rows.map((row, i) => (
      <React.Fragment key={i}>
        {i > 0 && <br />}
        {marked ? spell(row) : plain(row)}
      </React.Fragment>
    ))}
  </span>
);

const Head = ({ title }: { title?: string }) => (
  <ThumbHead>
    {title && (
      <>
        <ThumbEyebrow>CSS Introduction</ThumbEyebrow>
        <ThumbTitle>{title}</ThumbTitle>
      </>
    )}
  </ThumbHead>
);

type ThumbData = { no: number; title?: string; selected?: boolean; top: number; body: React.ReactNode };

const thumbs: ThumbData[] = [
  {
    no: 28,
    top: 48,
    body: (
      <>
        <ThumbLead $accent>How to add styling?</ThumbLead>
        <ThumbLead>CSS Introduction</ThumbLead>
      </>
    ),
  },
  {
    no: 29,
    title: "What is CSS?",
    top: 0,
    body: (
      <>
        <ThumbBullets $line={17}>
          <li><span>CSS stands for <u>C</u>ascading <u>S</u>tyle <u>S</u>heets</span></li>
          <li><Lines rows={["CSS describes how HTML elements are to be displayed on screen,", "paper, or in other media"]} /></li>
          <li><Lines rows={["CSS saves a lot of work. It can control the layout of multiple web", "pages all at once"]} /></li>
          <li><span>External stylesheets are stored in CSS files</span></li>
        </ThumbBullets>
        <ThumbText $top={95} $line={17}>Note: HTML describes the content, CSS styles it.</ThumbText>
      </>
    ),
  },
  {
    no: 30,
    title: "Insert CSS",
    top: 8,
    body: (
      <>
        <ThumbHeading>External Style Sheet</ThumbHeading>
        <ThumbText $top={6}>
          An external style sheet file can be referenced with the <InlineCode>&lt;link&gt;</InlineCode> tag<br />
          inside the <InlineCode>&lt;head&gt;</InlineCode> section of an HTML page.
        </ThumbText>
        <ThumbCode $top={6}>
          <Val>&lt;</Val>head<Val>&gt;</Val>{"\n"}
          <Val>&lt;</Val>link <Prop>rel</Prop><Val>="stylesheet"</Val> <Prop>type</Prop><Val>="text/css"</Val> <Prop>href</Prop><Val>="style.css"&gt;</Val>{"\n"}
          <Val>&lt;/</Val>head<Val>&gt;</Val>
        </ThumbCode>
        <ThumbHeading $top={27}>Internal Style Sheet</ThumbHeading>
        <ThumbText $top={6}>
          Internal styles are defined within the <InlineCode>&lt;style&gt;</InlineCode> element, inside the<br />
          <InlineCode>&lt;head&gt;</InlineCode> section of an HTML page.
        </ThumbText>
        <ThumbHeading $top={8}>Inline Styles</ThumbHeading>
        <ThumbText $top={6}>
          To use inline styles, add the style attribute to the relevant element.<br />
          The style attribute can contain any CSS property.
        </ThumbText>
      </>
    ),
  },
  {
    no: 31,
    title: "Syntax",
    selected: true,
    top: 5,
    body: (
      <>
        <ThumbText $line={12}>
          A CSS rule-set consists of a selector and a declaration block<br />
          containing property/value pairs:
        </ThumbText>
        <ThumbCode $top={5}>
          selector {"{"}{"\n"}
          {"  "}<Prop>property</Prop><Val>: value;</Val>{"\n"}
          {"  "}<Prop>property</Prop><Val>: value;</Val>{"\n"}
          {"}"}
        </ThumbCode>
        <ThumbBullets $top={12} $gap={1}>
          {bullets.map((rows) => (
            <li key={rows[0]}><Lines rows={rows} /></li>
          ))}
        </ThumbBullets>
      </>
    ),
  },
  {
    no: 32,
    title: "Element selector",
    top: 12,
    body: (
      <>
        <ThumbText $line={12}>The element selector selects elements based on the element name.</ThumbText>
        <ThumbText $top={23} $line={12}>
          You can select all <InlineCode>&lt;p&gt;</InlineCode> elements on a page like this (in this case, all<br />
          <InlineCode>&lt;p&gt;</InlineCode> elements will be center-aligned, with a red text color):
        </ThumbText>
        <ThumbCode $top={4}>
          p {"{"}{"\n"}
          {"    "}<Prop>text-align</Prop><Val>: center;</Val>{"\n"}
          {"    "}<Prop>color</Prop><Val>: red;</Val>
        </ThumbCode>
      </>
    ),
  },
];

type TaskApp = { name: string; open?: boolean; active?: boolean; badge?: string; icon: React.ReactNode };

const affinity = (a: string, b: string, c: string, d: string) => (
  <Icon w={28} h={26}>
    <path d="M10 1h7l10 18-4 6H4L1 19z" fill={d} />
    <path d="M13 3L3 20h9L20 8z" fill={a} />
    <path d="M14 3l11 16-3 4-9-15z" fill={b} />
    <path d="M8 20h17l-3 4H4z" fill={c} />
  </Icon>
);

const FzMark = styled.span`
  width: 28px;
  height: 27px;
  background: #b30808;
  border: 1px solid #7c0000;
  color: #fff;
  font: italic 700 19px/25px ${ui};
  text-align: center;
`;

const RpMark = styled.span`
  width: 28px;
  height: 28px;
  padding-left: 8px;
  background: linear-gradient(90deg, #6f1390 0, #6f1390 6px, #c77be0 6px, #c77be0 7px, #9a1fc0 7px);
  color: #fff;
  font: 600 13px/40px ${ui};
  overflow: hidden;
`;

const SkypeMark = styled.span`
  width: 26px;
  height: 26px;
  border-radius: 11px 14px;
  background: linear-gradient(#27b6f2, #0c82d0);
  color: #fff;
  font: 700 19px/25px ${ui};
  text-align: center;
`;

const apps: TaskApp[] = [
  {
    name: "Explorer", open: true,
    icon: (
      <Icon w={26} h={24}>
        <path d="M1 2h10l3 3h11v16H1z" fill="#f3d477" />
        <path d="M1 7h24v14H1z" fill="#fbe59a" />
        <path d="M4 22v-8c0-2 1-3 3-3h12c2 0 3 1 3 3v8h-5v-5H9v5z" fill="#4aa3d8" />
      </Icon>
    ),
  },
  {
    name: "Notizen",
    icon: (
      <Icon w={24} h={24}>
        <path d="M1 1h22v17l-5 5H1z" fill="#f7b500" />
        <path d="M23 18h-5v5z" fill="#d08f00" />
        <path d="M9.500 15c0-2-2.500-3-2.500-6a5 5 0 0 1 10 0c0 3-2.500 4-2.500 6zM10 18h4" stroke="#fff" strokeWidth="1.600" />
      </Icon>
    ),
  },
  { name: "Skype", icon: <SkypeMark>S</SkypeMark> },
  { name: "FileZilla", icon: <FzMark>Fz</FzMark> },
  { name: "Axure RP", icon: <RpMark>RP</RpMark> },
  { name: "Affinity Designer", icon: affinity("#2ad1f5", "#1277c9", "#0c4f94", "#134a7d") },
  { name: "Affinity Photo", open: true, icon: affinity("#e06cf5", "#8f35c9", "#5c1b94", "#4b1a7d") },
  {
    name: "Balsamiq",
    icon: (
      <Icon w={28} h={26}>
        <path d="M14 3l4-1 9 19-5 3H4l6-4z" fill="#c43d1a" />
        <path d="M15 5l8 17M14 10l5 12M14 15l2 7" stroke="#f5963c" strokeWidth="2" />
        <path d="M1 4l12-2v16L1 16z" fill="#e8412a" />
        <path d="M5 6v8M5 6.500h2.500a1.700 1.700 0 0 1 0 3.500H5h3a1.900 1.900 0 0 1 0 3.800H5" stroke="#fff" strokeWidth="1.200" />
      </Icon>
    ),
  },
  {
    name: "Zeichenstift",
    icon: (
      <Icon w={18} h={27}>
        <path d="M9 0l8 24-8 3-8-3z" fill="#e8c9a0" />
        <path d="M9 0l2 7H7z" fill="#333" />
        <path d="M1 25l2-8 3 2 3-3 3 3 3-2 2 8-8 2z" fill="#9c2a22" />
        <path d="M6 19l3-3 3 3v8H6z" fill="#e8483a" />
      </Icon>
    ),
  },
  {
    name: "Krita",
    icon: (
      <Icon w={24} h={24}>
        <circle cx="12" cy="12" r="11" fill="#f0a8e8" />
        <path d="M12 1a11 11 0 0 1 11 11H12z" fill="#f7c4fa" />
        <path d="M1 12a11 11 0 0 0 11 11V12z" fill="#5fd8e8" />
        <path d="M12 23a11 11 0 0 0 11-11H12z" fill="#f7e08a" />
        <circle cx="12" cy="12" r="6" fill="#fff" opacity="0.6" />
        <path d="M2 1l12 12 1 4-4-2L1 4z" fill="#2e2e3c" />
      </Icon>
    ),
  },
  {
    name: "Visual Studio Code", open: true,
    icon: (
      <Icon w={28} h={28}>
        <path d="M20 1l7 3v20l-7 3L6 23l14 1z" fill="#1b86d6" />
        <path d="M20 1v22" stroke="#0f6cb5" strokeWidth="2" />
        <path d="M2 9l12 10M2 18L14 8" stroke="#1b86d6" strokeWidth="3" />
      </Icon>
    ),
  },
  {
    name: "Blender",
    icon: (
      <Icon w={28} h={26}>
        <path d="M12 3l6 5M1 19L17 7M4 9h12" stroke="#f08a28" strokeWidth="3" />
        <ellipse cx="17.500" cy="15" rx="9.500" ry="8.500" fill="#f08a28" />
        <circle cx="17.500" cy="14.500" r="5" fill="#fff" />
        <circle cx="17.500" cy="14.500" r="3" fill="#235a9c" />
      </Icon>
    ),
  },
  {
    name: "Unity",
    icon: (
      <Icon w={20} h={22}>
        <path d="M17 0l2 8-9 2-9 1 6-8z" fill="#444" />
        <path d="M1 11l8-6-3 5h7l4-8 2 1-3 8 3 8-2 1-5-8H6l4 6z" fill="#fff" />
        <path d="M8 18l8 3 1-3-6-6z" fill="#d8d8d8" />
      </Icon>
    ),
  },
  {
    name: "Outlook",
    icon: (
      <Icon w={26} h={24}>
        <path d="M11 5h14v14H11z" fill="#fff" />
        <path d="M12 9l4 5 8-8" stroke="#0f6ebf" strokeWidth="2" />
        <path d="M0 3l14-3v24L0 21z" fill="#0f6ebf" />
        <ellipse cx="7" cy="12" rx="3" ry="3.600" stroke="#fff" strokeWidth="2" />
      </Icon>
    ),
  },
  {
    name: "Chrome",
    icon: (
      <Icon w={27} h={27} vb="0 0 26 26">
        <circle cx="13" cy="13" r="12.500" fill="#fdd43b" />
        <path d="M13 13L2.200 6.700A12.500 12.500 0 0 1 24 7.200H13z" fill="#e0493c" />
        <path d="M2.200 6.700A12.500 12.500 0 0 0 12 25.400L18 16 13 13l-5 3z" fill="#2e9e4f" />
        <circle cx="13" cy="13" r="5.800" fill="#fff" />
        <circle cx="13" cy="13" r="4.500" fill="#4a87ee" />
      </Icon>
    ),
  },
  { name: "Edge", icon: <FaEdgeLegacy size={25} color="#0f80dc" /> },
  {
    name: "Firefox Developer Edition",
    icon: (
      <Icon w={27} h={27} vb="0 0 26 26">
        <circle cx="13" cy="14" r="11.500" fill="#1f8df0" />
        <circle cx="13" cy="12" r="6" fill="#0b2f8a" />
        <path d="M4 4c-6 9-1 21 9 21 7 0 12-5 12-12-1-5-3-8-7-12 1 4 3 6 2 10-1 6-8 7-11 3 2 0 3 0 5-2-2-2-5-1-7-4-1-1-2-2-3-4z" fill="#1b6df0" />
        <path d="M18 1c4 4 6 7 7 12 0 5-3 9-7 11 3-4 4-8 2-13-1-4-3-6-2-10z" fill="#1fc2f5" />
      </Icon>
    ),
  },
  {
    name: "PowerPoint", open: true, active: true,
    icon: (
      <Icon w={26} h={24}>
        <path d="M12 3h13v18H12z" fill="#fff" />
        <path d="M15 8h7M15 12h7M15 16h7" stroke="#d24726" strokeWidth="1.500" />
        <path d="M0 3l15-3v24L0 21z" fill="#d24726" />
        <path d="M5.500 18V7H8a3 3 0 0 1 0 6H5.500" stroke="#fff" strokeWidth="2" />
      </Icon>
    ),
  },
  {
    name: "Firefox", open: true,
    icon: (
      <Icon w={27} h={27} vb="0 0 26 26">
        <circle cx="13" cy="13" r="10" fill="#3552c4" />
        <path d="M3 4c-5 9-1 21 10 21 7 0 12-5 12-12-1-5-3-8-7-12 0 4 3 6 2 11-1 6-10 7-12 1 2 0 4 0 6-2-2-3-7 0-11-7z" fill="#f7562a" />
        <path d="M18 1c4 4 6 7 7 12 0 7-5 12-12 12 6-2 9-7 8-13-1-4-3-6-3-11z" fill="#fcc82e" />
      </Icon>
    ),
  },
  {
    name: "Messenger", open: true, badge: "1",
    icon: (
      <Icon w={28} h={28}>
        <rect width="28" height="28" fill="#1285fa" />
        <path d="M14 7c4 0 7 3 7 7s-3 7-7 7l-4 2v-3c-2-1-3-3-3-6 0-4 3-7 7-7z" fill="#fff" />
        <path d="M9 16l4-4 2 2 4-2-4 4-2-2z" fill="#1285fa" />
      </Icon>
    ),
  },
];

/* ---------- page ---------- */

const MenuButton = ({ icon, label, caret, space, h, dim }: {
  icon: React.ReactNode; label: string; caret?: boolean; space?: number; h?: number; dim?: boolean;
}) => (
  <SmallButton $h={h} $dim={dim}>
    <SmallIcon>{icon}</SmallIcon>
    {label}
    {caret && <Caret $space={space} />}
  </SmallButton>
);

const Footer = ({ label, launcher, dim }: { label: string; launcher?: boolean; dim?: boolean }) => (
  <GroupFooter>
    <GroupLabel>{label}</GroupLabel>
    {launcher && (dim ? <Dim><Launcher /></Dim> : <Launcher />)}
  </GroupFooter>
);

export default function PresentationApp() {
  return (
    <App>
      <Global />
      <TitleBar>
        <QuickAccess>
          <AutoSave>
            Automatisches Speichern
            <Toggle type="checkbox" />
          </AutoSave>
          <ToolButton $space={17} aria-label="Speichern"><SaveIcon /></ToolButton>
          <ToolButton $space={13} aria-label="Rückgängig"><UndoIcon /><Caret $space={6} /></ToolButton>
          <ToolButton $space={15} aria-label="Wiederholen"><RedoIcon /></ToolButton>
          <ToolButton $space={22} aria-label="Von Beginn an"><PresentIcon /></ToolButton>
          <ToolButton aria-label="Symbolleiste anpassen"><CustomIcon /></ToolButton>
        </QuickAccess>
        <DocTitle>Screendesign_WS18_Lecture_04.pptx</DocTitle>
        <WindowTools>
          <UserName>Patrick Muenster</UserName>
          <WindowButton aria-label="Menüband-Anzeigeoptionen">
            <Icon w={15} h={13}><path d="M0.500 0.500h14v12H0.500zM0.500 3.500h14M7.500 11V6M5 8l2.500-2.500L10 8" stroke="currentColor" /></Icon>
          </WindowButton>
          <WindowButton aria-label="Minimieren">
            <Icon w={14} h={13}><path d="M0 6.500h14" stroke="currentColor" /></Icon>
          </WindowButton>
          <WindowButton aria-label="Wiederherstellen">
            <Icon w={13} h={13}><path d="M0.500 3.500h9v9h-9zM3 3V0.500h9.500V10H10" stroke="currentColor" /></Icon>
          </WindowButton>
          <WindowButton aria-label="Schließen"><CloseIcon /></WindowButton>
        </WindowTools>
      </TitleBar>

      <TabRow>
        {tabs.map((tab, i) => (
          <Tab key={tab} $active={i === 1} $wide={i === 0}>{tab}</Tab>
        ))}
        <TellMe aria-label="Was möchten Sie tun?" />
        <TabTools>
          <ShareButton>
            <Icon w={19} h={18}>
              <path d="M1 5v12h15v-4M5 12c0-5 4-7 8-7V1l5 6-5 5V9c-4 0-6 1-8 3z" stroke="#ddd" />
            </Icon>
            Freigeben
          </ShareButton>
          <PlainButton aria-label="Kommentare">
            <Icon w={18} h={16}><path d="M0.500 0.500h17v11H7l-3 3.500v-3.500H0.500z" stroke="#ddd" /></Icon>
          </PlainButton>
        </TabTools>
      </TabRow>

      <Ribbon>
        <GhostTip>Vollbild ausschneiden</GhostTip>
        <Group>
          <GroupBody $left={1} $gap={1}>
            <BigButton $w={62}>
              <BigIcon><PasteIcon /></BigIcon>
              Einfügen
              <BigCaret />
            </BigButton>
            <SmallColumn>
              <MenuButton icon={<CutIcon />} label="Ausschneiden" />
              <MenuButton icon={<CopyIcon />} label="Kopieren" caret space={8} />
              <MenuButton icon={<BrushIcon />} label="Format übertragen" />
            </SmallColumn>
          </GroupBody>
          <Footer label="Zwischenablage" launcher />
        </Group>
        <Group>
          <GroupBody $left={2}>
            <BigButton $w={48}>
              <BigIcon><NewSlideIcon /></BigIcon>
              Neue
              <Row>Folie <Caret /></Row>
            </BigButton>
            <SmallColumn>
              <MenuButton icon={<LayoutIcon />} label="Layout" caret />
              <MenuButton icon={<ResetIcon />} label="Zurücksetzen" />
              <MenuButton icon={<SectionIcon />} label="Abschnitt" caret />
            </SmallColumn>
          </GroupBody>
          <Footer label="Folien" />
        </Group>
        <Group>
          <GroupBody $left={4}>
            <ToolLines>
              <ToolLine $gap={0}>
                <Combo $w={130}>
                  <ComboInput aria-label="Schriftart" />
                  <Caret $space={3} />
                </Combo>
                <Combo $w={54}>
                  <ComboInput aria-label="Schriftgrad" defaultValue="20" />
                  <Caret $space={3} />
                </Combo>
                <ToolLine $gap={6} $left={6}>
                  <PlainButton aria-label="Schrift vergrößern"><Letter as="span" $size={17}>A</Letter><SizeMark /></PlainButton>
                  <PlainButton aria-label="Schrift verkleinern"><Letter as="span" $size={15}>A</Letter><SizeMark down /></PlainButton>
                  <Divider />
                  <PlainButton aria-label="Formatierung löschen"><EraserIcon /></PlainButton>
                </ToolLine>
              </ToolLine>
              <ToolLine $gap={5} $left={5}>
                <Row $gap={14}>
                  <Letter $weight={700}>F</Letter>
                  <Letter $italic>K</Letter>
                  <Letter $deco="underline">U</Letter>
                  <Letter $weight={700}>S</Letter>
                  <Letter $size={12} $deco="line-through">abc</Letter>
                </Row>
                <PlainButton><Letter as="span" $size={12} $deco="underline">AV</Letter><Caret /></PlainButton>
                <PlainButton><Letter as="span">Aa</Letter><Caret $space={2} /></PlainButton>
                <Divider />
                <PlainButton aria-label="Texthervorhebungsfarbe">
                  <Icon w={20} h={20}>
                    <path d="M18 3l-9 11" stroke="#7a7a7a" strokeWidth="3" />
                    <path d="M1 18h18" stroke="#9a9a9a" strokeWidth="3" />
                  </Icon>
                  <Caret />
                </PlainButton>
                <PlainButton><Letter as="span">A</Letter><Caret $space={6} /></PlainButton>
              </ToolLine>
            </ToolLines>
          </GroupBody>
          <Footer label="Schriftart" launcher dim />
        </Group>
        <Group>
          <GroupBody $left={5}>
            <ToolLines $end={6}>
              <ToolLine $gap={5}>
                <PlainButton aria-label="Aufzählungszeichen"><ListIcon /><Caret /></PlainButton>
                <PlainButton aria-label="Nummerierung"><NumberIcon /><Caret /></PlainButton>
                <Divider />
                <PlainButton aria-label="Einzug verkleinern"><IndentIcon /></PlainButton>
                <PlainButton aria-label="Einzug vergrößern"><IndentIcon flip /></PlainButton>
                <Divider />
                <PlainButton aria-label="Zeilenabstand"><SpacingIcon /><Caret /></PlainButton>
              </ToolLine>
              <ToolLine $gap={6}>
                <PlainButton aria-label="Linksbündig"><LinesIcon cut={4} /></PlainButton>
                <PlainButton aria-label="Zentriert"><LinesIcon cut={4} shift={2} /></PlainButton>
                <PlainButton aria-label="Rechtsbündig"><LinesIcon cut={4} shift={4} /></PlainButton>
                <PlainButton aria-label="Blocksatz"><LinesIcon /></PlainButton>
                <Divider />
                <PlainButton aria-label="Spalten"><LinesIcon /><Caret /></PlainButton>
              </ToolLine>
            </ToolLines>
            <SmallColumn>
              <MenuButton dim icon={<TextDirIcon />} label="Textrichtung" caret />
              <MenuButton dim icon={<AlignTextIcon />} label="Text ausrichten" caret />
              <MenuButton dim icon={<SmartArtIcon />} label="In SmartArt konvertieren" caret />
            </SmallColumn>
          </GroupBody>
          <Footer label="Absatz" launcher dim />
        </Group>
        <Group>
          <GroupBody $left={3}>
            <Gallery>
              <Shapes>
                {shapes.map((shape, i) => (
                  <ShapeButton key={i} aria-label={`Form ${i + 1}`}>
                    <Icon w={17} h={16}>{shape}</Icon>
                  </ShapeButton>
                ))}
              </Shapes>
              <GalleryScroll>
                <ScrollStep $up aria-label="Nach oben"><Caret /></ScrollStep>
                <ScrollStep aria-label="Nach unten"><Caret /></ScrollStep>
                <ScrollStep aria-label="Weitere"><Caret /></ScrollStep>
              </GalleryScroll>
            </Gallery>
            <BigButton $w={68}>
              <BigIcon><ArrangeIcon /></BigIcon>
              Anordnen
              <BigCaret />
            </BigButton>
            <BigButton $w={94} $dim>
              <BigIcon><QuickStyleIcon /></BigIcon>
              Schnellformat-
              <Row>vorlagen <Caret /></Row>
            </BigButton>
            <SmallColumn>
              <MenuButton h={24} dim icon={<FillIcon />} label="Fülleffekt" caret />
              <MenuButton h={24} dim icon={<OutlineIcon />} label="Formkontur" caret />
              <MenuButton h={24} dim icon={<EffectIcon />} label="Formeffekte" caret />
            </SmallColumn>
          </GroupBody>
          <Footer label="Zeichnen" launcher dim />
        </Group>
        <Group>
          <GroupBody $left={5}>
            <SmallColumn>
              <MenuButton h={24} icon={<SearchIcon />} label="Suchen" />
              <MenuButton h={24} icon={<ReplaceIcon />} label="Ersetzen" caret space={8} />
              <MenuButton h={24} icon={<CursorIcon />} label="Markieren" caret />
            </SmallColumn>
          </GroupBody>
          <Footer label="Bearbeiten" />
        </Group>
        <RibbonEnd>
          <PlainButton aria-label="Menüband reduzieren"><ChevronUp /></PlainButton>
        </RibbonEnd>
      </Ribbon>

      <Workspace>
        <Sidebar>
          <ThumbList>
            {thumbs.map((t) => (
              <ThumbItem key={t.no}>
                <ThumbIndex>
                  <span>{t.no}</span>
                  {t.title && <StarIcon />}
                </ThumbIndex>
                <Thumb $selected={t.selected}>
                  <Head title={t.title} />
                  <ThumbBody $top={t.top}>{t.body}</ThumbBody>
                </Thumb>
              </ThumbItem>
            ))}
          </ThumbList>
          <ScrollBar $w={19}>
            <ScrollButton $up aria-label="Nach oben"><Caret /></ScrollButton>
            <Track $before={738} $after={533}><Handle $h={125} /></Track>
            <ScrollButton aria-label="Nach unten"><Caret /></ScrollButton>
          </ScrollBar>
        </Sidebar>

        <Center>
          <Stage>
            <Canvas>
              <Slide>
                <SlideHead>
                  <Eyebrow>{spell("CSS [Introduction]")}</Eyebrow>
                  <SlideTitle>Syntax</SlideTitle>
                </SlideHead>
                <SlideBody>
                  <p>
                    {spell("A CSS [rule]-set [consists] [of] a [selector] [and] a [declaration] block")}
                    <br />
                    {spell("[containing] [property]/[value] [pairs]:")}
                  </p>
                  <CodeBlock>
                    <Typo>selector</Typo> {"{"}{"\n"}
                    {"  "}<Typo>property</Typo>: <Typo>value</Typo>;{"\n"}
                    {"  "}<Typo>property</Typo>: <Typo>value</Typo>;{"\n"}
                    {"}"}
                  </CodeBlock>
                  <Bullets>
                    {bullets.map((rows) => (
                      <li key={rows[0]}><Lines rows={rows} marked /></li>
                    ))}
                  </Bullets>
                </SlideBody>
              </Slide>
            </Canvas>
            <ScrollBar $w={20}>
              <ScrollButton $up aria-label="Nach oben"><Caret /></ScrollButton>
              <Track $before={747} $after={484}><Handle $h={22} /></Track>
              <ScrollButton aria-label="Nach unten"><Caret /></ScrollButton>
              <ScrollButton $plain $h={21} aria-label="Vorherige Folie">
                <Icon w={9} h={10}><path d="M4.500 0L8.500 4.500h-8zM4.500 5L8.500 9.500h-8z" fill="#c8c8c8" /></Icon>
              </ScrollButton>
              <ScrollButton $plain $h={21} aria-label="Nächste Folie">
                <Icon w={9} h={10}><path d="M4.500 4.500L0.500 0h8zM4.500 9.500L0.500 5h8z" fill="#c8c8c8" /></Icon>
              </ScrollButton>
              <ScrollButton as="div" $plain $h={22} />
            </ScrollBar>
          </Stage>
          <NotesPane>Klicken Sie, um Notizen hinzuzufügen</NotesPane>
        </Center>
      </Workspace>

      <StatusBar>
        <StatusButton $space={17}>Folie 31 von 51</StatusButton>
        <StatusButton $space={13} aria-label="Rechtschreibprüfung">
          <Icon w={17} h={14}>
            <path d="M8 2v11l-1-1H1V1h6l1 1 1-1h3M8 13l1-1h3" stroke="#ddd" />
            <path d="M11 4l5 6M16 4l-5 6" stroke="#fff" strokeWidth="1.500" />
          </Icon>
        </StatusButton>
        <StatusButton>Deutsch (Deutschland)</StatusButton>
        <StatusSpacer />
        <StatusButton $space={12}>
          <Icon w={14} h={13}><path d="M0 6.500h14M0 9.500h14M0 12.500h10" stroke="#ddd" /><path d="M7 0l3 4H4z" fill="#ddd" /></Icon>
          Notizen
        </StatusButton>
        <StatusButton $space={17} $gap={2}>
          <Icon w={18} h={15}>
            <rect width="16" height="10" fill="#f0f0f0" />
            <path d="M4 14h6" stroke="#f0f0f0" strokeWidth="2" />
            <circle cx="13" cy="11" r="3" fill="#262626" stroke="#f0f0f0" strokeWidth="2" />
          </Icon>
          Anzeigeeinstellungen
        </StatusButton>
        <ViewButton $active aria-label="Normal">
          <Icon w={15} h={14}><path d="M0 0h5v14H0z" fill="#fff" /><path d="M5 0.500h9.500v13H5M5 10.500h9" stroke="#fff" /><path d="M7 3h5v4H7z" fill="#fff" /></Icon>
        </ViewButton>
        <ViewButton aria-label="Foliensortierung">
          <Icon w={15} h={14}><path d="M0 0h7v6H0zM8 0h7v6H8zM0 8h7v6H0zM8 8h7v6H8z" fill="#f0f0f0" /></Icon>
        </ViewButton>
        <ViewButton aria-label="Leseansicht">
          <Icon w={16} h={14}><path d="M8 2v11M1 1h6l1 1 1-1h6v11H9l-1 1-1-1H1zM3 4h3M3 6h3M3 8h3M10 4h3M10 6h3M10 8h3" stroke="#ddd" /></Icon>
        </ViewButton>
        <ViewButton aria-label="Bildschirmpräsentation">
          <Icon w={15} h={14}><path d="M0 1h15M2 1v7h11V1M5 3.500h5M5 5.500h5M7.500 8v5M5 13.500h5" stroke="#eee" /></Icon>
        </ViewButton>
        <Row>
          <StatusButton $space={2} aria-label="Verkleinern">
            <Icon w={12} h={10}><path d="M4 5h8" stroke="#fff" strokeWidth="2" /></Icon>
          </StatusButton>
          <Zoom type="range" min={0} max={100} defaultValue={60} aria-label="Zoom" />
          <StatusButton $space={11} aria-label="Vergrößern">
            <Icon w={10} h={10}><path d="M0 5h10M5 0v10" stroke="#fff" strokeWidth="2" /></Icon>
          </StatusButton>
          <StatusButton $space={12}>157 %</StatusButton>
          <StatusButton aria-label="An Fenster anpassen">
            <Icon w={14} h={13}><path d="M4 0.500H0.500V4M10 0.500h3.500V4M4 12.500H0.500V9M10 12.500h3.500V9M7 1v4M7 12V8M2 6.500h3M12 6.500H9" stroke="#ddd" /></Icon>
          </StatusButton>
        </Row>
      </StatusBar>

      <Taskbar>
        <SystemApps>
          <TaskButton aria-label="Start">
            <Icon w={20} h={20}><path d="M0 3l8-1v8H0zM9 2l11-2v10H9zM0 11h8v8l-8-1zM9 11h11v9L9 18z" fill="#fff" /></Icon>
          </TaskButton>
          <TaskButton aria-label="Taskansicht">
            <Icon w={20} h={20}><path d="M0.500 0v3.500h13V0M0.500 6.500h13v7h-13zM0.500 20v-3.500h13V20M17.500 0v4M17.500 9v11" stroke="#c8c8c8" /><path d="M16 5h3v3h-3z" fill="#fff" /></Icon>
          </TaskButton>
        </SystemApps>
        <Apps>
          {apps.map((a) => (
            <TaskButton key={a.name} $open={a.open} $active={a.active} aria-label={a.name}>
              {a.icon}
              {a.badge && <Badge>{a.badge}</Badge>}
            </TaskButton>
          ))}
        </Apps>
        <Tray>
          <TrayButton $w={62} aria-label="Kontakte">
            <Icon w={18} h={18}><circle cx="12" cy="4" r="3" stroke="#eee" strokeWidth="1.300" /><path d="M8 10c2-3 8-3 9 2" stroke="#eee" strokeWidth="1.300" /><circle cx="6" cy="10" r="3" stroke="#eee" strokeWidth="1.300" /><path d="M1 17c1-5 9-5 10 0" stroke="#eee" strokeWidth="1.300" /></Icon>
          </TrayButton>
          <TrayButton $w={24} aria-label="Ausgeblendete Symbole"><ChevronUp w={15} stroke={1} /></TrayButton>
          <TrayButton $w={32} aria-label="Akku">
            <Icon w={20} h={14}><path d="M6 3.500h12v9H4V8M18 6h1.500v4H18M1 1v3h5V1M2 0v2M5 0v2M3.500 4v4" stroke="#ddd" /></Icon>
          </TrayButton>
          <TrayButton $w={26} aria-label="WLAN">
            <Icon w={16} h={15}><path d="M1 14C1 6 7 1 15 1M5 14c0-5 4-9 10-9M9 14c0-3 2-5 6-5" stroke="#bbb" /><circle cx="13.500" cy="13" r="1.500" fill="#fff" /></Icon>
          </TrayButton>
          <TrayButton $w={26} aria-label="Lautstärke">
            <Icon w={18} h={14}><path d="M0.500 4.500h3L8 1v12L3.500 9.500h-3zM10 5c1 1 1 3 0 4" stroke="#eee" /><path d="M12 3c2 2 2 6 0 8M14.500 1c3 4 3 8 0 12" stroke="#888" /></Icon>
          </TrayButton>
          <TrayButton $w={42} aria-label="Windows Ink">
            <Icon w={17} h={17}><path d="M4 16c-5-1-3-6 1-6 5 0 2 5 4 5s5-2 7-5h-4M6 12L12 1l3 1-6 11-3 2z" stroke="#eee" strokeWidth="1.200" /></Icon>
          </TrayButton>
          <TrayButton $w={32} aria-label="Bildschirmtastatur">
            <Icon w={26} h={16}><path d="M0.500 0.500h25v15H0.500z" stroke="#ddd" /><path d="M3 4.500h20M3 7.500h20" stroke="#ddd" strokeDasharray="2 1" /><path d="M6 11.500h14" stroke="#ddd" /></Icon>
          </TrayButton>
          <TrayButton $w={48}>DEU</TrayButton>
          <Clock><span>13:44</span><span>07.11.2018</span></Clock>
          <TrayButton $w={60} aria-label="Info-Center">
            <Icon w={20} h={20}><path d="M0 0h20v14h-9l-4 5v-5H0z" fill="#fff" /><path d="M4 4h12M4 7h12M4 10h8" stroke="#111" /></Icon>
            <TrayBadge>5</TrayBadge>
          </TrayButton>
        </Tray>
      </Taskbar>

      <Dialog role="dialog" aria-label="Microsoft PowerPoint">
        <DialogHead>
          Microsoft PowerPoint
          <PlainButton aria-label="Schließen"><CloseIcon size={13} /></PlainButton>
        </DialogHead>
        <DialogMain>
          <WarnIcon>
            <Icon w={33} h={30}>
              <path d="M16.500 1l15 28h-30z" fill="#e6bd77" stroke="#e6bd77" strokeLinejoin="round" />
              <path d="M15 7h3l-0.500 13h-2z" fill="#222" />
              <circle cx="16.500" cy="24.500" r="2" fill="#222" />
            </Icon>
          </WarnIcon>
          <DialogText>
            <p>Möchten Sie die Änderungen an "Screendesign_WS18_Lecture_04.pptx" speichern?</p>
            <p>Wenn Sie auf "Nicht speichern" klicken, ist eine aktuelle Kopie dieser Datei vorübergehend verfügbar.</p>
            <a href="#info">Weitere Informationen</a>
          </DialogText>
        </DialogMain>
        <DialogActions>
          <DialogButton $primary>S<u>p</u>eichern</DialogButton>
          <DialogButton><u>N</u>icht speichern</DialogButton>
          <DialogButton>Abbrechen</DialogButton>
        </DialogActions>
      </Dialog>
    </App>
  );
}
